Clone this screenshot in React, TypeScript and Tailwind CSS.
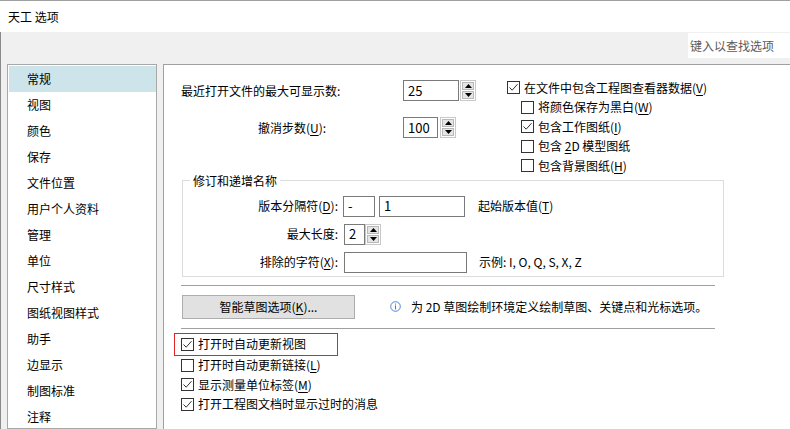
import React from "react";

const SIDEBAR_ITEMS = [
  "常规",
  "视图",
  "颜色",
  "保存",
  "文件位置",
  "用户个人资料",
  "管理",
  "单位",
  "尺寸样式",
  "图纸视图样式",
  "助手",
  "边显示",
  "制图标准",
  "注释",
];

const Key = ({ k }: { k: string }) => <span className="underline underline-offset-2">{k}</span>;

const CheckBox = ({ checked }: { checked: boolean }) => (
  <span className="w-[13px] h-[13px] border border-[#333333] bg-white flex items-center justify-center shrink-0">
    {checked && (
      <svg width="11" height="11" viewBox="0 0 11 11">
        <path d="M1.5 5.5 L4.2 8.2 L9.5 2.2" fill="none" stroke="#333333" strokeWidth="1" />
      </svg>
    )}
  </span>
);

const CheckRow = ({ checked, children }: { checked: boolean; children: React.ReactNode }) => (
  <div className="flex items-center gap-[4px] h-[19.5px]">
    <CheckBox checked={checked} />
    <span className="leading-[16px] whitespace-nowrap">{children}</span>
  </div>
);

const Spinner = ({ h }: { h: string }) => (
  <div className={`w-[16px] ${h} flex flex-col gap-[1px] border border-[#c8c8c8] bg-white p-[1px]`}>
    <div className="flex-1 bg-[#e5e5e5] border border-[#b8b8b8] flex items-center justify-center">
      <svg width="7" height="4" viewBox="0 0 7 4">
        <path d="M0 4 L3.5 0 L7 4 Z" fill="#000" />
      </svg>
    </div>
    <div className="flex-1 bg-[#e5e5e5] border border-[#b8b8b8] flex items-center justify-center">
      <svg width="7" height="4" viewBox="0 0 7 4">
        <path d="M0 0 L7 0 L3.5 4 Z" fill="#000" />
      </svg>
    </div>
  </div>
);

const Field = ({ w, value }: { w: string; value?: string }) => (
  <div className={`${w} h-[21px] border border-[#7a7a7a] bg-white flex items-center pl-[4px] leading-[16px] text-[13px]`}>
    {value}
  </div>
);

const App = () => {
  return (
    <div className="w-[790px] h-[429px] overflow-hidden flex flex-col bg-[#f0f0f0] text-[12px] text-black border-t border-[#a0a0a0] font-['Noto_Sans_CJK_SC','Noto_Sans',sans-serif]">
      <div className="h-[31px] bg-white flex items-center pl-[8px] leading-[16px] shrink-0">天工 选项</div>

      <div className="flex-1 flex flex-col border-l border-[#8a8a8a] min-h-0">
        <div className="h-[32px] flex justify-end items-start shrink-0 pt-[1px]">
          <div className="w-[102px] h-[25px] bg-white text-[#5a5a5a] flex items-center pl-[2px] leading-[16px]">
            键入以查找选项
          </div>
        </div>

        <div className="flex-1 flex gap-[6px] pl-[6px] min-h-0">
          <div className="w-[150px] border border-[#a8a8a8] bg-white pl-[1px] pt-[1px] overflow-hidden">
            {SIDEBAR_ITEMS.map((item, i) => (
              <div
                key={item}
                className={`h-[26px] w-[147px] flex items-center pl-[18px] leading-[16px] ${i === 0 ? "bg-[#cde4ea]" : ""}`}
              >
                {item}
              </div>
            ))}
          </div>

          <div className="flex-1 bg-white border-l border-t border-[#a0a0a0] pl-[17px] overflow-hidden">
            <div className="flex pt-[13px]">
              <div className="w-[326px] flex flex-col gap-[16px] pt-[2px]">
                <div className="flex items-center h-[21px]">
                  <span className="w-[222px] leading-[16px] whitespace-nowrap">最近打开文件的最大可显示数:</span>
                  <Field w="w-[56px]" value="25" />
                  <div className="ml-[1px]">
                    <Spinner h="h-[21px]" />
                  </div>
                </div>
                <div className="flex items-center h-[21px]">
                  <span className="w-[222px] pl-[77px] leading-[16px] whitespace-nowrap">
                    撤消步数(<Key k="U" />):
                  </span>
                  <Field w="w-[35px]" value="100" />
                  <div className="ml-[2px]">
                    <Spinner h="h-[21px]" />
                  </div>
                </div>
              </div>

              <div className="flex flex-col">
                <CheckRow checked>
                  在文件中包含工程图查看器数据(<Key k="V" />)
                </CheckRow>
                <div className="pl-[14px] flex flex-col">
                  <CheckRow checked={false}>
                    将颜色保存为黑白(<Key k="W" />)
                  </CheckRow>
                  <CheckRow checked>
                    包含工作图纸(<Key k="I" />)
                  </CheckRow>
                  <CheckRow checked={false}>
                    包含 <Key k="2" />D 模型图纸
                  </CheckRow>
                  <CheckRow checked={false}>
                    包含背景图纸(<Key k="H" />)
                  </CheckRow>
                </div>
              </div>
            </div>

            <fieldset className="ml-[1px] mt-[-3px] w-[542px] border border-[#dcdcdc] pt-[7px] pb-[3px] flex flex-col gap-[7px]">
              <legend className="ml-[7px] px-[3px] leading-[16px]">修订和递增名称</legend>
              <div className="flex items-center h-[21px]">
                <span className="w-[155px] text-right leading-[16px] whitespace-nowrap">
                  版本分隔符(<Key k="D" />):
                </span>
                <div className="ml-[5px] flex items-center gap-[4px]">
                  <Field w="w-[32px]" value="-" />
                  <Field w="w-[86px]" value="1" />
                </div>
                <span className="ml-[13px] leading-[16px] whitespace-nowrap">
                  起始版本值(<Key k="T" />)
                </span>
              </div>
              <div className="flex items-center h-[21px]">
                <span className="w-[155px] text-right leading-[16px] whitespace-nowrap">最大长度:</span>
                <div className="ml-[6px] flex items-center">
                  <Field w="w-[21px]" value="2" />
                  <Spinner h="h-[21px]" />
                </div>
              </div>
              <div className="flex items-center h-[21px]">
                <span className="w-[155px] text-right leading-[16px] whitespace-nowrap">
                  排除的字符(<Key k="X" />):
                </span>
                <div className="ml-[6px]">
                  <Field w="w-[123px]" />
                </div>
                <span className="ml-[12px] leading-[16px] whitespace-nowrap">示例: I, O, Q, S, X, Z</span>
              </div>
            </fieldset>

            <div className="mt-[8px] w-[534px] h-px bg-[#a0a0a0]" />

            <div className="mt-[9px] flex items-center ml-[1px]">
              <button className="w-[173px] h-[24px] bg-[#e1e1e1] border border-[#adadad] leading-[16px] flex items-center justify-center">
                智能草图选项(<Key k="K" />)...
              </button>
              <svg className="ml-[35px]" width="11" height="11" viewBox="0 0 11 11">
                <circle cx="5.5" cy="5.5" r="4.8" fill="none" stroke="#3a7bd5" strokeWidth="0.9" />
                <rect x="5" y="2.6" width="1" height="1" fill="#3a7bd5" />
                <rect x="5" y="4.4" width="1" height="4" fill="#3a7bd5" />
              </svg>
              <span className="ml-[10px] leading-[16px] whitespace-nowrap">
                为 2D 草图绘制环境定义绘制草图、关键点和光标选项。
              </span>
            </div>

            <div className="mt-[9px] w-[534px] h-px bg-[#a0a0a0]" />

            <div className="mt-[4px] -ml-[7px] w-[164px] h-[23px] border border-[#e02424] pl-[6px] flex items-center">
              <div className="flex items-center gap-[4px]">
                <CheckBox checked />
                <span className="leading-[16px] whitespace-nowrap">打开时自动更新视图</span>
              </div>
            </div>
            <div className="flex flex-col">
              <CheckRow checked={false}>
                打开时自动更新链接(<Key k="L" />)
              </CheckRow>
              <CheckRow checked>
                显示测量单位标签(<Key k="M" />)
              </CheckRow>
              <CheckRow checked>打开工程图文档时显示过时的消息</CheckRow>
            </div>
          </div>
        </div>
      </div>
    </div>
  );
};

export default App;
